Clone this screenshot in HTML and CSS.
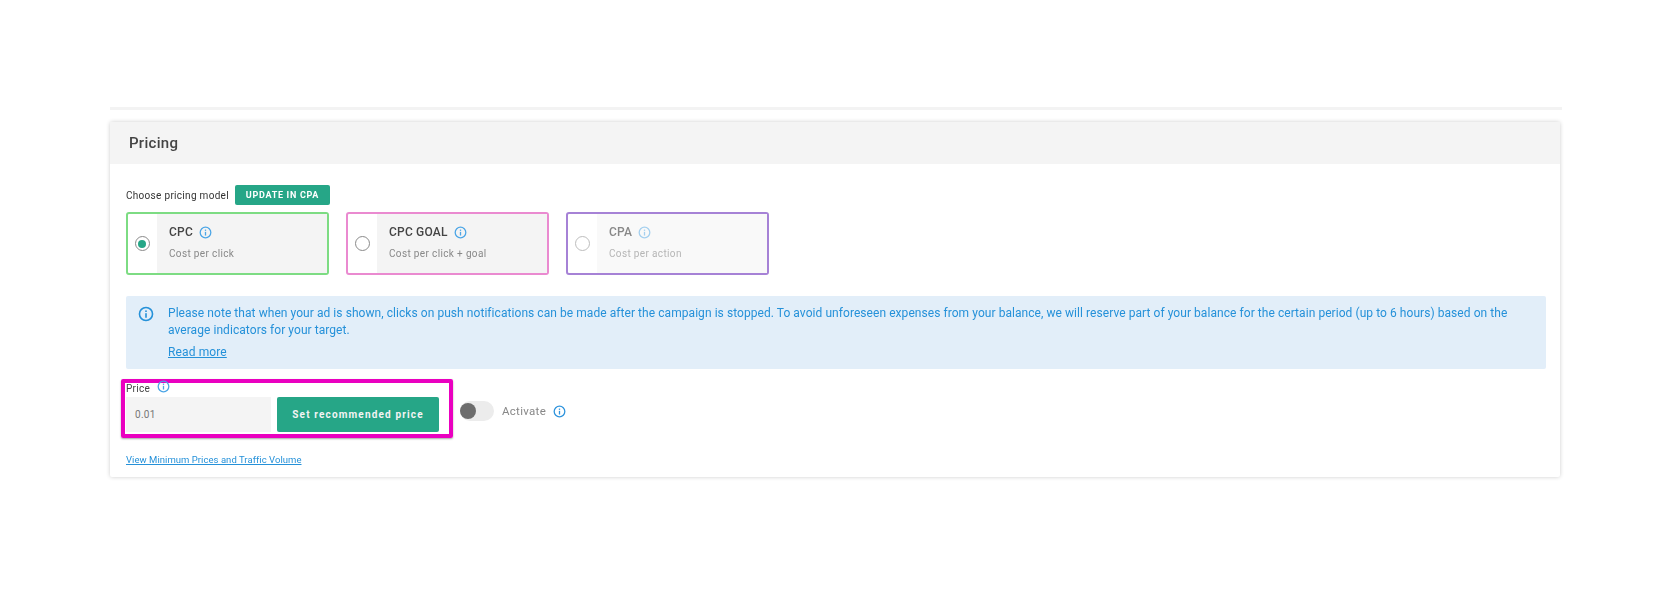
FILE: index.html
```html
<!DOCTYPE html>
<html lang="en">
<head>
<meta charset="utf-8">
<title>Pricing</title>
<link rel="stylesheet" href="styles.css">
</head>
<body>
<svg class="defs" width="0" height="0" aria-hidden="true">
  <symbol id="info" viewBox="0 0 24 24">
    <circle cx="12" cy="12" r="9.8" fill="none" stroke="currentColor" stroke-width="2.4"/>
    <rect x="10.8" y="10.8" width="2.4" height="6.8" fill="currentColor"/>
    <rect x="10.8" y="6.6" width="2.4" height="2.4" fill="currentColor"/>
  </symbol>
</svg>
<main class="page">
  <div class="top-edge"></div>
  <section class="card">
    <header class="card-head">Pricing</header>
    <div class="card-body">
      <div class="model-row">
        <span class="model-label">Choose pricing model</span>
        <button class="update-btn">UPDATE IN CPA</button>
      </div>
      <div class="options">
        <div class="option option-green">
          <div class="radio-cell"><span class="radio radio-on"></span></div>
          <div class="option-body">
            <div class="option-title">CPC <svg class="ico"><use href="#info"/></svg></div>
            <div class="option-sub">Cost per click</div>
          </div>
        </div>
        <div class="option option-pink">
          <div class="radio-cell"><span class="radio"></span></div>
          <div class="option-body">
            <div class="option-title">CPC GOAL <svg class="ico"><use href="#info"/></svg></div>
            <div class="option-sub">Cost per click + goal</div>
          </div>
        </div>
        <div class="option option-purple">
          <div class="radio-cell"><span class="radio"></span></div>
          <div class="option-body">
            <div class="option-title">CPA <svg class="ico"><use href="#info"/></svg></div>
            <div class="option-sub">Cost per action</div>
          </div>
        </div>
      </div>
      <div class="notice">
        <svg class="notice-ico"><use href="#info"/></svg>
        <div class="notice-text">
          <p>Please note that when your ad is shown, clicks on push notifications can be made after the campaign is stopped. To avoid unforeseen expenses from your balance, we will reserve part of your balance for the certain period (up to 6 hours) based on the average indicators for your target.</p>
          <a class="read-more" href="#">Read more</a>
        </div>
      </div>
      <div class="price-row">
        <div class="price-group">
          <div class="highlight"></div>
          <div class="price-label">Price <svg class="ico ico-price"><use href="#info"/></svg></div>
          <div class="price-controls">
            <div class="price-input">0.01</div>
            <button class="set-btn">Set recommended price</button>
          </div>
        </div>
        <div class="toggle"><span class="knob"></span></div>
        <span class="activate">Activate</span>
        <svg class="ico ico-activate"><use href="#info"/></svg>
      </div>
      <a class="min-link" href="#">View Minimum Prices and Traffic Volume</a>
    </div>
  </section>
</main>
</body>
</html>
```
FILE: styles.css
```css
* { box-sizing: border-box; }
html, body { margin: 0; background: #fff; }
body { font-family: Roboto, "Liberation Sans", sans-serif; overflow: hidden; height: 593px; }
.defs { position: absolute; }
.page { padding: 0 110px; width: 1670px; filter: blur(0.6px); }
.top-edge { height: 110px; width: 1452px; border-bottom: 3px solid #f3f3f3; }
.card {
  margin-top: 12px; width: 1450px; height: 355px; background: #fff;
  border-radius: 2px; box-shadow: 0 0 4px rgba(0,0,0,.2);
}
.card-head {
  height: 42px; background: #f4f4f4; padding: 0 19px; line-height: 43px;
  font-size: 15px; font-weight: 500; color: #444; letter-spacing: .3px;
}
.card-body { padding: 21px 14px 0 16px; }
.model-row { display: flex; align-items: center; height: 20px; }
.model-label { font-size: 10px; color: #333; letter-spacing: .3px; margin-right: 6px; }
.update-btn {
  width: 95px; height: 20px; border: 0; border-radius: 2px; background: #26a687; color: #fff; padding: 0;
  font: 700 9px Roboto, sans-serif; letter-spacing: .7px;
}
.options { display: flex; gap: 17px; margin-top: 7px; }
.option { display: flex; width: 203px; height: 63px; border: 2px solid; border-radius: 3px; background: #fff; }
.option-green { border-color: #7ddc83; }
.option-pink { border-color: #ea8ad0; }
.option-purple { border-color: #a682d6; }
.radio-cell { width: 29px; padding-right: 1px; display: flex; align-items: center; justify-content: center; }
.radio { width: 15px; height: 15px; border: 1.5px solid #8a8a8a; border-radius: 50%; display: block; position: relative; }
.radio-on::after { content: ""; position: absolute; inset: 2.5px; background: #26a687; border-radius: 50%; }
.option-purple .radio { border-color: #bdbdbd; }
.option-body { flex: 1; background: #f4f4f4; padding: 11px 12px; }
.option-purple .option-body { background: #f9f9f9; }
.option-title { display: flex; align-items: center; gap: 6px; font-size: 12px; font-weight: 500; color: #444; line-height: 14px; height: 14px; letter-spacing: .2px; }
.option-purple .option-title { color: #888; }
.option-sub { margin-top: 8px; font-size: 10px; color: #888; line-height: 14px; letter-spacing: .35px; }
.option-purple .option-sub { color: #b5b5b5; }
.ico { width: 13px; height: 13px; color: #4da6e6; flex: none; }
.option-purple .ico { color: #a5d0ef; }
.notice {
  display: flex; margin-top: 21px; width: 1420px; height: 73px; background: #e2eef9; border-radius: 2px;
  padding: 9px 16px 0 12px; color: #2591d9;
}
.notice-ico { width: 16px; height: 16px; margin: 1px 14px 0 0; flex: none; }
.notice-text { font-size: 12px; line-height: 17px; letter-spacing: .06px; }
.notice-text p { margin: 0; }
.read-more { display: inline-block; margin-top: 5px; color: #2591d9; text-decoration: underline; letter-spacing: .12px; }
.price-row { display: flex; align-items: center; margin-top: 11px; height: 62px; }
.price-group { position: relative; align-self: flex-start; width: 313px; margin-right: 15px; height: 52px; }
.highlight { position: absolute; left: -5px; top: -1px; width: 332px; height: 59px; border: 4px solid #ea00c0; border-radius: 2px; box-shadow: 0 1px 2px rgba(0,0,0,.35); }
.price-label { display: flex; font-size: 10px; color: #444; line-height: 12px; height: 17px; padding-top: 3px; gap: 7px; position: relative; letter-spacing: .3px; }
.ico-price { margin-top: -3px; }
.price-controls { display: flex; gap: 6px; }
.price-input { width: 145px; height: 35px; background: #f4f4f4; color: #777; font-size: 10px; line-height: 35px; padding-left: 9px; letter-spacing: .3px; }
.set-btn {
  width: 162px; height: 35px; border: 0; border-radius: 2px; background: #26a687; color: #f4f4f4; padding: 0;
  font: 700 10px Roboto, sans-serif; letter-spacing: 1.15px;
}
.toggle { width: 34px; height: 20px; border-radius: 10px; background: #ececec; margin: 0 8px 0 6px; position: relative; }
.knob { position: absolute; left: 0; top: 2px; width: 16px; height: 16px; background: #6d6d6d; border-radius: 50%; }
.activate { font-size: 11.5px; color: #888; letter-spacing: .3px; margin-right: 7px; }
.ico-activate { color: #2f94dd; }
.min-link { display: inline-block; margin-top: 12px; font-size: 9.5px; color: #2591d9; text-decoration: underline; letter-spacing: .04px; }
```
